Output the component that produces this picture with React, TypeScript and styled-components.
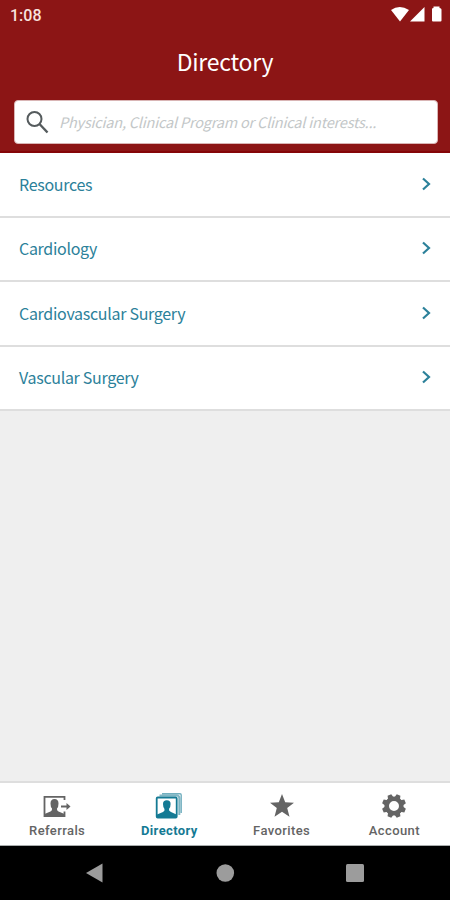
import React from "react";
import styled, { createGlobalStyle } from "styled-components";

const GlobalStyle = createGlobalStyle`
  *, *::before, *::after { box-sizing: border-box; }
  body { margin: 0; background: #efefef; }
`;

const sourceSans = `"Noto Sans CJK SC", "Noto Sans", sans-serif`;
const teal = "#2c819a";
const grey = "#646464";

const Screen = styled.div`
  width: 450px;
  height: 900px;
  display: flex;
  flex-direction: column;
  background: #efefef;
  overflow: hidden;
  font-family: ${sourceSans};
`;

const Header = styled.header`
  height: 153px;
  flex: none;
  display: flex;
  flex-direction: column;
  background: #8c1515;
  border-bottom: 2px solid #850608;
`;

const StatusBar = styled.div`
  height: 30px;
  display: flex;
  align-items: center;
  justify-content: space-between;
  padding: 0 7px 0 10px;
`;

const Clock = styled.span`
  font: 500 16px/31px Roboto, sans-serif;
  color: #f8e2df;
`;

const Title = styled.h1`
  margin: 0;
  height: 70px;
  font-size: 23px;
  line-height: 62px;
  font-weight: 400;
  letter-spacing: -0.25px;
  text-align: center;
  color: #fff;
`;

const SearchBox = styled.label`
  height: 44px;
  flex: none;
  margin: 0 12px 0 14px;
  padding-left: 11px;
  display: flex;
  align-items: center;
  gap: 10px;
  background: #fff;
  border: 1px solid #d9b5b5;
  border-radius: 4px;
`;

const SearchInput = styled.input`
  flex: 1;
  min-width: 0;
  border: 0;
  outline: 0;
  padding: 0;
  background: transparent;
  font: italic 400 14.5px/24px ${sourceSans};
  letter-spacing: -0.2px;
  color: #555;
  &::placeholder { color: #c3c7c8; opacity: 1; }
`;

const List = styled.ul`
  margin: 0;
  padding: 0;
  flex: 1;
  list-style: none;
`;

const Row = styled.li`
  height: 64.4px;
  display: flex;
  align-items: center;
  justify-content: space-between;
  padding: 0 17px 1.6px 19px;
  background: #fff;
  border-bottom: 2px solid #dedede;
  font-size: 16px;
  line-height: 24px;
  letter-spacing: -0.3px;
  color: ${teal};
  &:first-child { height: 65px; }
`;

const TabBar = styled.nav`
  height: 65px;
  flex: none;
  display: grid;
  grid-template-columns: repeat(4, 1fr);
  padding-left: 1px;
  background: #fff;
  border-top: 2px solid #dedede;
  border-bottom: 1px solid #a9adad;
`;

const Tab = styled.div<{ $active?: boolean }>`
  display: flex;
  flex-direction: column;
  align-items: center;
  padding-top: 8px;
  font: ${p => (p.$active ? 700 : 500)} 13px/19px Roboto, sans-serif;
  letter-spacing: 0.4px;
  color: ${p => (p.$active ? "#147a94" : grey)};
  svg { display: block; }
  &:last-child { padding-left: 1px; }
`;

const SystemNav = styled.div`
  height: 54px;
  flex: none;
  display: flex;
  align-items: center;
  justify-content: space-between;
  padding: 0 85px;
  background: #000;
`;

const StatusIcons = () => (
  <svg width="54" height="20" viewBox="389 5 54 20" fill="#fff">
    <path d="M391 10Q399.500 4 409 10L400 21.500Z" />
    <path d="M410 21.500L424.500 7V21.500Z" />
    <path d="M432 9Q432 8 433.500 8V6.500H439.500V8Q441.500 8 441.500 9.500V20.500Q441.500 21.500 440.500 21.500H433Q432 21.500 432 20.500Z" />
  </svg>
);

const SearchIcon = () => (
  <svg width="23" height="24" viewBox="0 0 23 24" fill="none" stroke="#555b5d" strokeWidth="2">
    <circle cx="8.500" cy="9" r="7" />
    <path d="M13.500 14L21.500 22.500" strokeWidth="2.400" />
  </svg>
);

const Chevron = () => (
  <svg width="14" height="16" viewBox="0 0 14 16" fill="none" stroke={teal} strokeWidth="2.200">
    <path d="M4 2.500L10 8L4 13.500" />
  </svg>
);

const ReferralsIcon = () => (
  <svg width="30" height="30" viewBox="0 0 30 30" fill="none" stroke="currentColor">
    <path d="M22.500 9V5.800H2.500V25H22.500V20.500" strokeWidth="1.800" />
    <path fill="currentColor" stroke="none" d="M2.500 25V23L8.500 20.500Q10.500 19.500 10 17.500Q8.500 16 8.500 12.500Q8.500 8 12.500 8T16.500 12.500Q16.500 16 15 17.500Q14.500 19.500 16.500 20.500L22.500 23V25Z" />
    <path d="M19 15.500H26" strokeWidth="2" />
    <path d="M24.500 12L28.500 15.500L24.500 19Z" fill="currentColor" stroke="none" />
  </svg>
);

const DirectoryIcon = () => (
  <svg width="30" height="30" viewBox="0 0 30 30" fill="none" stroke="currentColor">
    <path d="M8 2.700H26Q27.200 2.700 27.200 4V22" strokeWidth="1.400" opacity=".6" />
    <path d="M5.500 4.500H23Q25.300 4.500 25.300 7V24" strokeWidth="2" opacity=".55" />
    <rect x="2.700" y="6.500" width="20" height="20" rx="1" strokeWidth="1.800" />
    <path fill="currentColor" stroke="none" d="M3 26.500V23.500L9 21Q11 20 10.500 18Q9 16.500 9 13Q9 9.300 12.800 9.300T16.600 13Q16.600 16.500 15 18Q14.500 20 17 21L22.500 23.500V26.500Z" />
  </svg>
);

const StarIcon = () => (
  <svg width="30" height="30" viewBox="0 0 30 30" fill="currentColor">
    <path d="M15 3L18.200 11.300L27 11.700L20.200 17.100L22.500 25.700L15 20.800L7.500 25.700L9.800 17.100L3 11.700L11.800 11.300Z" />
  </svg>
);

const teeth = [22.5, 67.5, 112.5, 157.5, 202.5, 247.5, 292.5, 337.5];

const GearIcon = () => (
  <svg width="30" height="30" viewBox="0 0 30 30" fill="currentColor">
    <circle cx="15" cy="15" r="7.300" fill="none" stroke="currentColor" strokeWidth="4.600" />
    {teeth.map(a => (
      <path key={a} d="M12 7L13 3H17L18 7Z" transform={`rotate(${a} 15 15)`} />
    ))}
  </svg>
);

const rows = ["Resources", "Cardiology", "Cardiovascular Surgery", "Vascular Surgery"];

const tabs = [
  { label: "Referrals", Icon: ReferralsIcon },
  { label: "Directory", Icon: DirectoryIcon, active: true },
  { label: "Favorites", Icon: StarIcon },
  { label: "Account", Icon: GearIcon },
];

export default function App() {
  return (
    <Screen>
      <GlobalStyle />
      <Header>
        <StatusBar>
          <Clock>1:08</Clock>
          <StatusIcons />
        </StatusBar>
        <Title>Directory</Title>
        <SearchBox>
          <SearchIcon />
          <SearchInput placeholder="Physician, Clinical Program or Clinical interests..." />
        </SearchBox>
      </Header>
      <List>
        {rows.map(name => (
          <Row key={name}>
            <span>{name}</span>
            <Chevron />
          </Row>
        ))}
      </List>
      <TabBar>
        {tabs.map(({ label, Icon, active }) => (
          <Tab key={label} $active={active}>
            <Icon />
            {label}
          </Tab>
        ))}
      </TabBar>
      <SystemNav>
        <svg width="20" height="22" viewBox="0 0 20 22" fill="#9c9c9c"><path d="M1 11L17.500 1.500V20.500Z" /></svg>
        <svg width="20" height="20" viewBox="0 0 20 20" fill="#9c9c9c"><circle cx="10.300" cy="10" r="8.800" /></svg>
        <svg width="20" height="20" viewBox="0 0 20 20" fill="#9c9c9c"><rect x="1" y="1" width="18" height="18" rx="1.500" /></svg>
      </SystemNav>
    </Screen>
  );
}
